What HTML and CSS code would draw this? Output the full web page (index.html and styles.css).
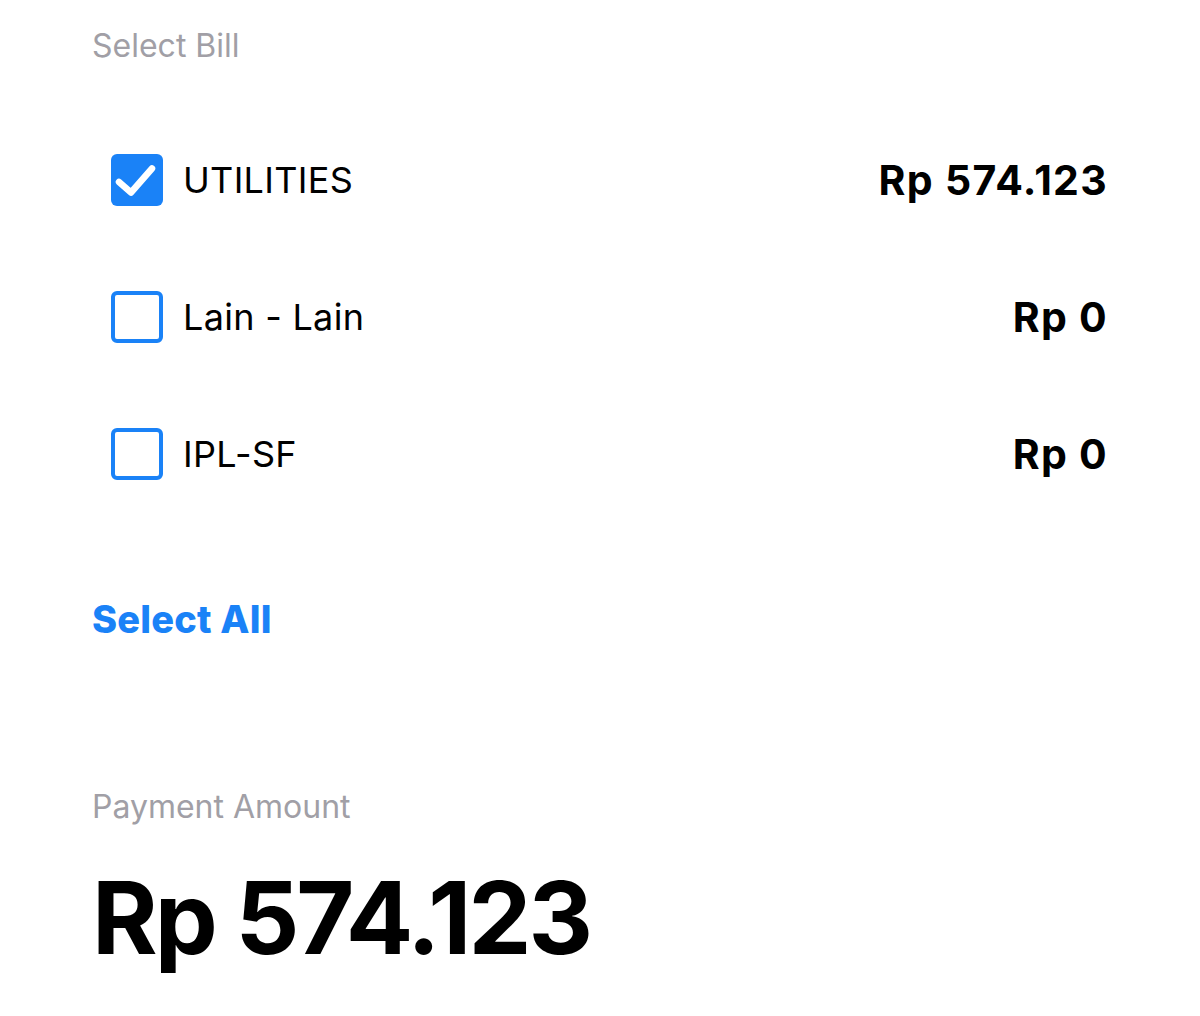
FILE: index.html
```html
<!DOCTYPE html>
<html>
<head>
<meta charset="utf-8">
<link rel="stylesheet" href="styles.css">
</head>
<body>
<div class="page">
  <div class="label">Select Bill</div>
  <div class="bills">
    <div class="row">
      <div class="left">
        <span class="box checked">
          <svg viewBox="0 0 52 52" width="52" height="52"><path d="M8 28 L20 38.5 L41 14.5" fill="none" stroke="#fff" stroke-width="6.5" stroke-linecap="round" stroke-linejoin="round"/></svg>
        </span>
        <span class="name">UTILITIES</span>
      </div>
      <span class="amount">Rp 574.123</span>
    </div>
    <div class="row">
      <div class="left">
        <span class="box"></span>
        <span class="name">Lain - Lain</span>
      </div>
      <span class="amount">Rp 0</span>
    </div>
    <div class="row">
      <div class="left">
        <span class="box"></span>
        <span class="name">IPL-SF</span>
      </div>
      <span class="amount">Rp 0</span>
    </div>
  </div>
  <div class="select-all">Select All</div>
  <div class="label pay">Payment Amount</div>
  <div class="total">Rp 574.123</div>
</div>
</body>
</html>
```
FILE: styles.css
```css
html, body { margin: 0; padding: 0; background: #fff; }
body { font-family: Inter, "Noto Sans", sans-serif; color: #000; }
.page { padding: 26px 94px 0 92px; }
.label { font-size: 32px; color: #a19fa6; line-height: 40px; }
.bills { margin-top: 88px; padding-left: 19px; display: flex; flex-direction: column; gap: 85px; }
.row { display: flex; align-items: center; justify-content: space-between; height: 52px; }
.left { display: flex; align-items: center; gap: 20px; }
.box { width: 52px; height: 52px; box-sizing: border-box; border: 4px solid #1a82f7; border-radius: 6px; display: block; }
.box.checked { background: #1a82f7; border: none; }
.box svg { display: block; }
.name { font-size: 36px; line-height: 40px; letter-spacing: 0.3px; }
.amount { font-size: 41px; font-weight: 700; line-height: 40px; letter-spacing: 1.3px; margin-right: -2px; }
.select-all { margin-top: 119px; font-size: 38px; font-weight: 800; color: #1a82f7; line-height: 40px; letter-spacing: 0.2px; }
.pay { margin-top: 148px; }
.total { margin-top: 36px; font-size: 100px; font-weight: 700; line-height: 110px; letter-spacing: -3px; }
```
